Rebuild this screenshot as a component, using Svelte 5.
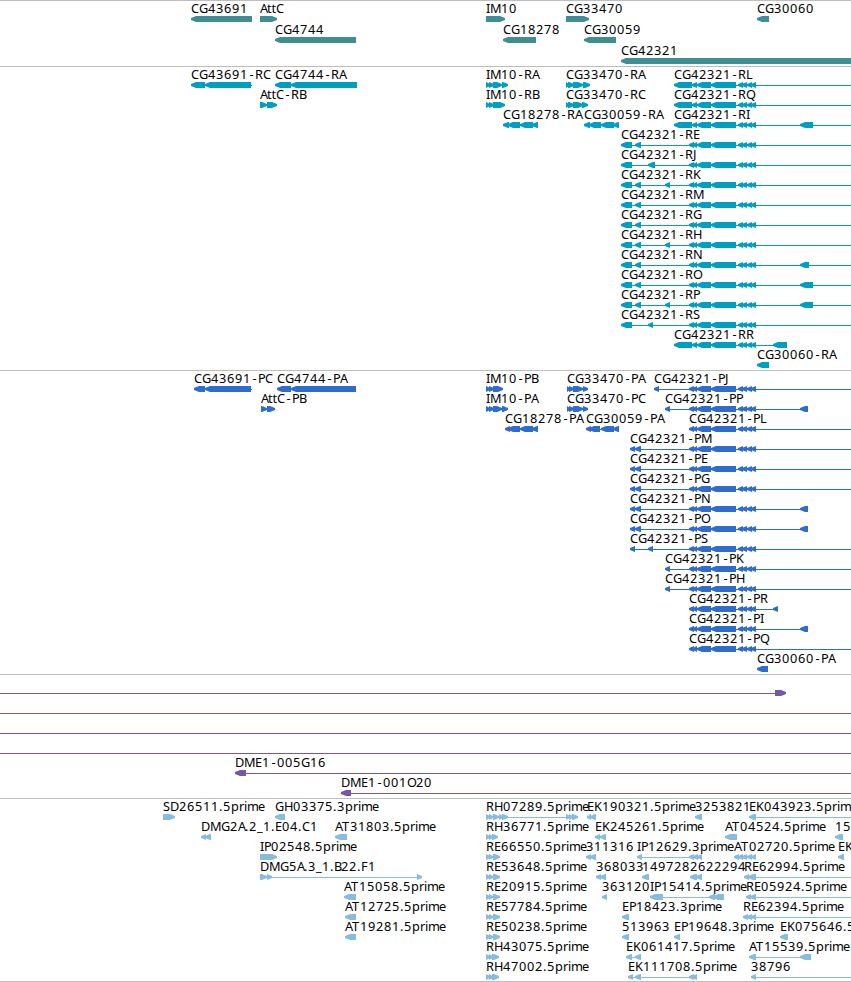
<script lang="ts">
	type Exon = [number, number];
	type Feature = { name: string; dir: string; exons: Exon[]; end?: number };

	const WIDTH = 851;
	const EDGE = 860;

	// advance width of each character, in whole pixels
	const advances: Record<string, number> = {
		C: 8, G: 9, A: 7, t: 4.5, I: 4, M: 11, R: 8, B: 7, L: 6, Q: 9, E: 7, J: 4, K: 8, H: 9,
		N: 9, O: 9, P: 7, S: 7, D: 9, T: 8, F: 7, '-': 7, '.': 4, _: 6,
		p: 8, r: 5, i: 3, m: 11, e: 7
	};

	// the hyphen is narrower than its cell
	function glyphs(name: string, x: number) {
		const xs = [];
		for (const c of name) {
			xs.push(c == '-' ? x + 1.5 : x);
			x += advances[c] ?? 8;
		}
		return xs.join(' ');
	}

	function left(name: string, exons: Exon[], end?: number): Feature {
		return { name, dir: 'left', exons, end };
	}

	function right(name: string, exons: Exon[], end?: number): Feature {
		return { name, dir: 'right', exons, end };
	}

	function arrow(dir: string, [a, b]: Exon, y: number) {
		const tip = Math.min(b - a, 5);
		if (dir == 'left') {
			return `${a},${y + 2} ${a + tip},${y} ${b},${y} ${b},${y + 6} ${a + tip},${y + 6} ${a},${y + 4}`;
		}
		return `${b},${y + 2} ${b - tip},${y} ${a},${y} ${a},${y + 6} ${b - tip},${y + 6} ${b},${y + 4}`;
	}

	function stop(f: Feature) {
		return f.end ?? f.exons[f.exons.length - 1][1];
	}

	// exons shared by the CG42321 isoforms
	const tail: Exon[] = [[697, 711], [711, 736], [738, 743], [742, 747], [747, 752], [751, 756]];
	const long: Exon[] = [[674, 692], [692, 697], ...tail];
	const short: Exon[] = [[689, 694], [693, 697], ...tail];
	const first: Exon = [621, 632];
	const second: Exon = [635, 641];
	const third: Exon = [665, 670];
	const re: Exon[] = [[486, 490], [489, 493], [493, 500]];

	const tracks: { kind: string; pitch: number; height: number; rows: Feature[][] }[] = [
		{
			kind: 'gene', pitch: 21, height: 66,
			rows: [
				[left('CG43691', [[191, 252]]), right('AttC', [[260, 277]]), right('IM10', [[486, 505]]), right('CG33470', [[566, 589]]), left('CG30060', [[757, 769]])],
				[left('CG4744', [[275, 356]]), left('CG18278', [[503, 536]]), left('CG30059', [[584, 616]])],
				[left('CG42321', [[621, EDGE]])]
			]
		},
		{
			kind: 'transcript', pitch: 20, height: 304,
			rows: [
				[
					left('CG43691-RC', [[191, 205], [205, 251]], 252),
					left('CG4744-RA', [[275, 291], [291, 357]]),
					right('IM10-RA', [[486, 490], [489, 494], [493, 502], [502, 508]]),
					right('CG33470-RA', [[566, 569], [568, 574], [573, 583], [583, 590]]),
					left('CG42321-RL', long, EDGE)
				],
				[
					right('AttC-RB', [[260, 267], [267, 277]]),
					right('IM10-RB', [[486, 490], [489, 494], [493, 505]]),
					right('CG33470-RC', [[566, 569], [568, 574], [573, 583], [582, 588]]),
					left('CG42321-RQ', long, EDGE)
				],
				[
					left('CG18278-RA', [[503, 509], [508, 520], [520, 533], [532, 538]]),
					left('CG30059-RA', [[584, 590], [589, 601], [601, 614], [613, 619]]),
					left('CG42321-RI', [...long, [800, 813]], EDGE)
				],
				[left('CG42321-RE', [first, second, ...short], EDGE)],
				[left('CG42321-RJ', [first, [648, 655], ...short], EDGE)],
				[left('CG42321-RK', [first, second, third, ...short], EDGE)],
				[left('CG42321-RM', [first, second, ...short], EDGE)],
				[left('CG42321-RG', [first, second, ...short], EDGE)],
				[left('CG42321-RH', [first, second, third, ...short], EDGE)],
				[left('CG42321-RN', [first, second, ...short, [800, 809]], EDGE)],
				[left('CG42321-RO', [first, second, ...short, [800, 813]], EDGE)],
				[left('CG42321-RP', [first, second, third, ...short, [800, 813]], EDGE)],
				[left('CG42321-RS', [first, [648, 653], ...short], EDGE)],
				[left('CG42321-RR', [...long, [773, 787]])],
				[left('CG30060-RA', [[757, 769]])]
			]
		},
		{
			kind: 'cds', pitch: 20, height: 304,
			rows: [
				[
					left('CG43691-PC', [[194, 205], [205, 251]], 252),
					left('CG4744-PA', [[277, 291], [291, 356]]),
					right('IM10-PB', [[486, 490], [489, 494], [493, 503]]),
					right('CG33470-PA', [[567, 570], [569, 574], [573, 583], [583, 588]]),
					left('CG42321-PJ', [[654, 659], ...short], EDGE)
				],
				[
					right('AttC-PB', [[261, 267], [267, 275]]),
					right('IM10-PA', [[486, 490], [489, 494], [493, 502], [502, 508]]),
					right('CG33470-PC', [[567, 570], [569, 574], [573, 583], [583, 588]]),
					left('CG42321-PP', [third, ...short, [800, 808]])
				],
				[
					left('CG18278-PA', [[505, 510], [508, 520], [520, 533], [532, 538]]),
					left('CG30059-PA', [[586, 591], [589, 600], [601, 614], [613, 619]]),
					left('CG42321-PL', short, EDGE)
				],
				[left('CG42321-PM', [[630, 635], second, ...short], EDGE)],
				[left('CG42321-PE', [[630, 635], second, ...short], EDGE)],
				[left('CG42321-PG', [[630, 635], second, ...short], EDGE)],
				[left('CG42321-PN', [[630, 635], second, ...short, [800, 808]])],
				[left('CG42321-PO', [[630, 635], second, ...short, [800, 808]])],
				[left('CG42321-PS', [[630, 635], [648, 653], ...short], EDGE)],
				[left('CG42321-PK', [third, ...short], EDGE)],
				[left('CG42321-PH', [third, ...short], EDGE)],
				[left('CG42321-PR', [...short, [773, 778]])],
				[left('CG42321-PI', [...short, [800, 808]])],
				[left('CG42321-PQ', short, EDGE)],
				[left('CG30060-PA', [[757, 768]])]
			]
		},
		{
			kind: 'bac', pitch: 20, height: 124,
			rows: [
				[right('', [[775, 786]])],
				[right('', [], EDGE)],
				[right('', [], EDGE)],
				[right('', [], EDGE)],
				[left('DME1-005G16', [[235, 246]], EDGE)],
				[left('DME1-001O20', [[341, 351]], EDGE)]
			]
		},
		{
			kind: 'est', pitch: 20, height: 183,
			rows: [
				[
					right('SD26511.5prime', [[163, 175]]),
					left('GH03375.3prime', [[275, 285]]),
					right('RH07289.5prime', [[486, 490], [489, 493], [493, 499], [499, 503], [502, 508], [566, 570], [569, 573], [572, 578]]),
					left('EK190321.5prime', [[587, 591], [590, 596]]),
					left('3253821', [[695, 702]]),
					left('EK043923.5prime', [[749, 756]], EDGE)
				],
				[
					left('DMG2A.2_1.E04.C1', [[201, 206], [205, 211]]),
					left('AT31803.5prime', [[335, 347]]),
					right('RH36771.5prime', [[486, 490], [489, 493], [492, 498]]),
					left('EK245261.5prime', [[595, 600], [600, 606]]),
					left('AT04524.5prime', [[725, 737]]),
					left('15', [[835, 843]])
				],
				[
					right('IP02548.5prime', [[260, 277]]),
					right('RE66550.5prime', re),
					left('311316', [[586, 591], [590, 596]]),
					left('IP12629.3prime', [[637, 642], [689, 694], [693, 698], [697, 702]]),
					left('AT02720.5prime', [[734, 739], [738, 743], [742, 747], [747, 752], [751, 756]]),
					left('EK', [[838, 844]])
				],
				[
					right('DMG5A.3_1.B22.F1', [[260, 267], [267, 272], [417, 422]]),
					right('RE53648.5prime', re),
					left('368033', [[596, 601], [600, 606]]),
					left('149728', [[642, 649]]),
					left('2622294', [[690, 697], [696, 702]]),
					left('RE62994.5prime', [[744, 749], [748, 756]], EDGE)
				],
				[
					left('AT15058.5prime', [[344, 356]]),
					right('RE20915.5prime', re),
					left('363120', [[602, 607]]),
					left('IP15414.5prime', [[650, 663], [709, 715], [713, 724]]),
					left('RE05924.5prime', [[746, 751], [750, 756]], EDGE)
				],
				[
					left('AT12725.5prime', [[345, 356]]),
					right('RE57784.5prime', re),
					left('EP18423.3prime', [[622, 629]]),
					left('RE62394.5prime', [[743, 748], [747, 752], [751, 756]], EDGE)
				],
				[
					left('AT19281.5prime', [[345, 356]]),
					right('RE50238.5prime', re),
					left('513963', [[622, 629]]),
					left('EP19648.3prime', [[674, 680]]),
					left('EK075646.5prime', [[780, 788]])
				],
				[
					right('RH43075.5prime', [[486, 490], [489, 493], [492, 499]]),
					left('EK061417.5prime', [[626, 632], [635, 641]]),
					left('AT15539.5prime', [[749, 756], [800, 811]])
				],
				[
					right('RH47002.5prime', [[486, 490], [489, 493], [492, 499]]),
					left('EK111708.5prime', [[628, 633], [635, 641], [689, 694], [692, 697]]),
					left('38796', [[751, 756]], EDGE)
				]
			]
		}
	];
</script>

<div class="browser">
	{#each tracks as track}
		<section class="track {track.kind}">
			<svg width={WIDTH} height={track.height - 1} viewBox="0 1 {WIDTH} {track.height - 1}">
				{#each track.rows as row, r}
					{#each row as f}
						{@const y = r * track.pitch + 16}
						{@const x0 = f.name ? f.exons[0][0] : 0}
						<rect x={x0} y={y + 3} width={stop(f) - x0} height="1" />
						{#each f.exons as exon}
							<polygon points={arrow(f.dir, exon, y)} />
						{/each}
						{#if f.name}
							<text x={glyphs(f.name, x0)} y={y - 3}>{f.name}</text>
						{/if}
					{/each}
				{/each}
			</svg>
		</section>
	{/each}
</div>

<style>
	:global(body) {
		background: #fff;
	}

	.browser {
		width: 851px;
		height: 982px;
		overflow: hidden;
	}

	.track {
		border-top: 1px solid #bebebe;
	}

	.track:last-child {
		border-bottom: 1px solid #bebebe;
	}

	svg {
		display: block;
		overflow: hidden;
	}

	text {
		font-family: 'Noto Sans', 'DejaVu Sans', sans-serif;
		font-size: 12.75px;
		fill: #000;
	}

	.gene {
		fill: #3f8e94;
	}

	.transcript {
		fill: #009fc2;
	}

	.cds {
		fill: #306ccc;
	}

	.bac {
		fill: #7656a8;
	}

	.est {
		fill: #88bcde;
	}
</style>
